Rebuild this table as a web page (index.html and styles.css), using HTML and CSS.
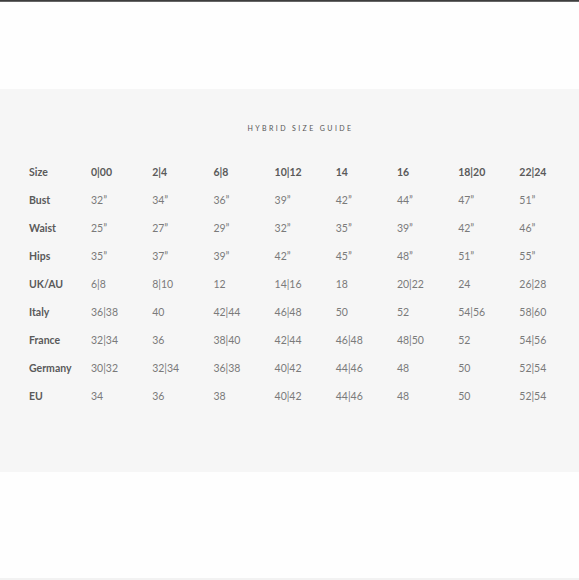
FILE: index.html
```html
<!DOCTYPE html>
<html>
<head>
<meta charset="utf-8">
<link rel="stylesheet" href="styles.css">
</head>
<body>
<div class="topline"></div>
<section class="panel">
  <h1 class="title">HYBRID SIZE GUIDE</h1>
  <div class="grid">
    <div class="lbl">Size</div><div class="hd">0|00</div><div class="hd">2|4</div><div class="hd">6|8</div><div class="hd">10|12</div><div class="hd">14</div><div class="hd">16</div><div class="hd">18|20</div><div class="hd">22|24</div>
    <div class="lbl">Bust</div><div>32”</div><div>34”</div><div>36”</div><div>39”</div><div>42”</div><div>44”</div><div>47”</div><div>51”</div>
    <div class="lbl">Waist</div><div>25”</div><div>27”</div><div>29”</div><div>32”</div><div>35”</div><div>39”</div><div>42”</div><div>46”</div>
    <div class="lbl">Hips</div><div>35”</div><div>37”</div><div>39”</div><div>42”</div><div>45”</div><div>48”</div><div>51”</div><div>55”</div>
    <div class="lbl">UK/AU</div><div>6|8</div><div>8|10</div><div>12</div><div>14|16</div><div>18</div><div>20|22</div><div>24</div><div>26|28</div>
    <div class="lbl">Italy</div><div>36|38</div><div>40</div><div>42|44</div><div>46|48</div><div>50</div><div>52</div><div>54|56</div><div>58|60</div>
    <div class="lbl">France</div><div>32|34</div><div>36</div><div>38|40</div><div>42|44</div><div>46|48</div><div>48|50</div><div>52</div><div>54|56</div>
    <div class="lbl">Germany</div><div>30|32</div><div>32|34</div><div>36|38</div><div>40|42</div><div>44|46</div><div>48</div><div>50</div><div>52|54</div>
    <div class="lbl">EU</div><div>34</div><div>36</div><div>38</div><div>40|42</div><div>44|46</div><div>48</div><div>50</div><div>52|54</div>
  </div>
</section>
<div class="bottomline"></div>
</body>
</html>
```
FILE: styles.css
```css
html, body {
  margin: 0;
  padding: 0;
  background: #fefefe;
  font-family: Lato, "Open Sans", sans-serif;
}
body {
  width: 579px;
  height: 580px;
  display: flex;
  flex-direction: column;
}
.topline {
  height: 2px;
  background: linear-gradient(#2a2a2a, #7a7a7a);
}
.panel {
  margin-top: 87px;
  height: 383px;
  box-sizing: border-box;
  background: #f6f6f6;
  padding-top: 33px;
}
.title {
  margin: 0;
  text-align: center;
  font-size: 7px;
  font-weight: 400;
  letter-spacing: 2.4px;
  line-height: 12px;
  color: #555;
  padding-left: 22px;
}
.grid {
  margin-top: 24px;
  padding-left: 29px;
  display: grid;
  grid-template-columns: 62px repeat(8, 61.2px);
  grid-auto-rows: 28px;
  align-items: center;
  font-size: 10.5px;
  color: #7a7a7a;
}
.lbl {
  color: #5a5a5a;
  font-weight: 700;
}
.hd {
  color: #5a5a5a;
  font-weight: 700;
}
.bottomline {
  margin-top: auto;
  height: 2px;
  background: #f2f2f2;
}
```
